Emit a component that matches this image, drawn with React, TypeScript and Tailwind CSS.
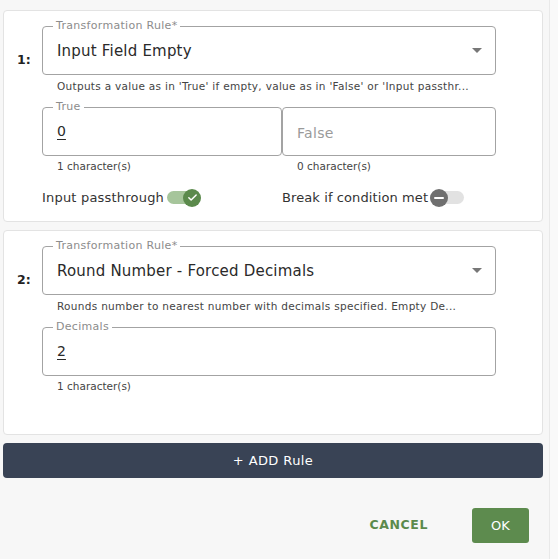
import { useState } from 'react'

const font = { fontFamily: '"DejaVu Sans", "Open Sans", sans-serif' }

// Outlined text field with floating label sitting on the border
function OutlinedField({
  label,
  value,
  placeholder,
  select,
  className,
}: {
  label?: string
  value?: string
  placeholder?: string
  select?: boolean
  className?: string
}) {
  return (
    <div className={`relative h-[49px] rounded border border-[#a3a3a3] bg-white flex items-center pl-[14px] pr-[13px] ${className ?? ''}`}>
      {label && (
        <span className="absolute -top-[8px] left-[10px] bg-white px-[3px] text-[11px] tracking-[0.3px] leading-[14px] text-[#8c8c8c]">
          {label}
        </span>
      )}
      {value ? (
        select ? (
          <span className="flex-1 pt-[1px] text-[15px] text-[#2a2a2a] tracking-[0.2px]">{value}</span>
        ) : (
          <span className="flex-1 text-[14px] text-[#2a2a2a] underline underline-offset-[3px]">{value}</span>
        )
      ) : (
        <span className="flex-1 text-[14px] tracking-[0.3px] text-[#9a9a9a] pt-[3px]">{placeholder}</span>
      )}
      {select && (
        <svg width="10" height="5" viewBox="0 0 10 5" className="ml-2">
          <path d="M0 0 L10 0 L5 5 Z" fill="#777" />
        </svg>
      )}
    </div>
  )
}

function Helper({ children, className }: { children: React.ReactNode; className?: string }) {
  return (
    <div className={`pl-[15px] pr-[14px] text-[10.5px] leading-[13px] text-[#444] whitespace-nowrap ${className ?? ''}`}>
      {children}
    </div>
  )
}

function Toggle({ on }: { on: boolean }) {
  return on ? (
    <div className="relative w-[34px] h-[18px] flex items-center">
      <div className="w-[30px] h-[13px] rounded-full bg-[#a6c59b]" />
      <div className="absolute right-0 top-0 w-[18px] h-[18px] rounded-full bg-[#5b8a4c] flex items-center justify-center">
        <svg width="11" height="11" viewBox="0 0 24 24" fill="none" stroke="white" strokeWidth="3.2" strokeLinecap="round" strokeLinejoin="round">
          <path d="M4 12.5l5 5L20 6.5" />
        </svg>
      </div>
    </div>
  ) : (
    <div className="relative w-[34px] h-[18px] flex items-center">
      <div className="w-[34px] h-[13px] rounded-full bg-[#e2e2e2]" />
      <div className="absolute left-0 top-0 w-[18px] h-[18px] rounded-full bg-[#6f6f6f] flex items-center justify-center">
        <div className="w-[10px] h-[2.5px] bg-white rounded" />
      </div>
    </div>
  )
}

function RuleCard({ n, children, height }: { n: number; children: React.ReactNode; height: string }) {
  return (
    <div className={`flex rounded border border-[#e3e3e3] bg-white ${height}`}>
      <div className="w-[38px] pl-[13px] pt-[40px] text-[12.5px] font-bold text-[#222]">{n}:</div>
      <div className="w-[454px] pt-[15px] flex flex-col">{children}</div>
    </div>
  )
}

export default function App() {
  const [passthrough] = useState(true)

  return (
    <div className="w-[558px] h-[559px] flex bg-[#f7f7f7]" style={font}>
      <div className="w-[549px] pl-[3px] pr-[6px] pt-[10px] flex flex-col">
        <RuleCard n={1} height="h-[212px]">
          <OutlinedField label="Transformation Rule*" value="Input Field Empty" select />
          <Helper className="mt-[5px] tracking-[0.3px]">
            Outputs a value as in 'True' if empty, value as in 'False' or 'Input passthr...
          </Helper>
          <div className="flex mt-[14px]">
            <div className="w-[240px]">
              <OutlinedField label="True" value="0" />
              <Helper className="mt-[4px]">1 character(s)</Helper>
            </div>
            <div className="flex-1">
              <OutlinedField placeholder="False" />
              <Helper className="mt-[4px]">0 character(s)</Helper>
            </div>
          </div>
          <div className="flex mt-[15px] items-center">
            <div className="w-[240px] flex items-center gap-[3px]">
              <span className="text-[13px] tracking-[0.2px] text-[#333]">Input passthrough</span>
              <Toggle on={passthrough} />
            </div>
            <div className="flex-1 flex items-center gap-[2px]">
              <span className="text-[13px] tracking-[0.1px] text-[#333]">Break if condition met</span>
              <Toggle on={false} />
            </div>
          </div>
        </RuleCard>

        <div className="mt-[8px]">
          <RuleCard n={2} height="h-[205px]">
            <OutlinedField label="Transformation Rule*" value="Round Number - Forced Decimals" select />
            <Helper className="mt-[5px] tracking-[0.3px]">
              Rounds number to nearest number with decimals specified. Empty De...
            </Helper>
            <OutlinedField label="Decimals" value="2" className="mt-[14px]" />
            <Helper className="mt-[4px]">1 character(s)</Helper>
          </RuleCard>
        </div>

        <button className="mt-[8px] h-[35px] w-full rounded bg-[#394355] text-white text-[13px] tracking-[0.4px]">
          + ADD Rule
        </button>

        <div className="flex justify-end items-center mt-[30px] pr-[14px]">
          <button className="text-[12.5px] font-bold tracking-[0.6px] text-[#5b8a4c] mr-[44px]">CANCEL</button>
          <button className="w-[57px] h-[35px] rounded-[3px] bg-[#5d8b4e] text-white text-[13px]">OK</button>
        </div>
      </div>
      <div className="flex-1 border-l border-[#e9e9e9] bg-[#f9f9f9]" />
    </div>
  )
}
